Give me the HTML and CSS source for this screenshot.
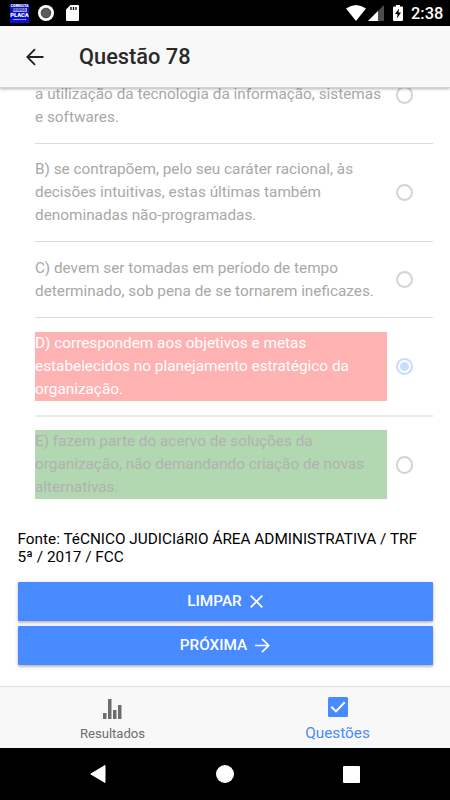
FILE: index.html
```html
<!DOCTYPE html>
<html lang="pt-BR">
<head>
<meta charset="utf-8">
<title>Questão 78</title>
<link rel="stylesheet" href="styles.css">
</head>
<body>
<div class="screen">
  <div class="status">
    <div class="app-icon"><span class="t1">CONSULTA</span><span class="t2">MINHA</span><span class="t3">PLACA</span><span class="t4">COMPLETA</span></div>
    <svg class="rec" width="16" height="16" viewBox="0 0 16 16"><circle cx="8" cy="8" r="8" fill="#fff"/><circle cx="8" cy="8" r="4.800" fill="#5c5c5c" stroke="#444" stroke-width="1"/></svg>
    <svg class="sd" width="13" height="16" viewBox="0 0 13 16"><path d="M4.500 0H12Q13 0 13 1V15Q13 16 12 16H1Q0 16 0 15V4.500Z" fill="#fff"/><path d="M5 2V5M7.500 2V5M10 2V5" stroke="#000" stroke-width="1.300"/></svg>
    <span class="spacer"></span>
    <svg class="wifi" width="20" height="16" viewBox="0 0 20 16"><path d="M0 3.500Q10-3.500 20 3.500L10 16Z" fill="#fff"/></svg>
    <svg class="signal" width="16" height="16" viewBox="0 0 16 16"><path d="M16 0V16H0Z" fill="#4d4d4d"/><path d="M10 6V16H0Z" fill="#fff"/></svg>
    <svg class="battery" width="10" height="16" viewBox="0 0 10 16"><path d="M3 0H7V1.500H9Q10 1.500 10 2.500V15Q10 16 9 16H1Q0 16 0 15V2.500Q0 1.500 1 1.500H3Z" fill="#fff"/><path d="M6 3.500L2 9H4.500L4 13.500L8 7.500H5.500Z" fill="#000"/></svg>
    <span class="clock">2:38</span>
  </div>
  <header class="header">
    <svg width="18" height="18" viewBox="0 0 18 18" fill="none" stroke="#222" stroke-width="1.800"><path d="M17.500 9H1.500M9 1.200L1.300 9L9 16.800"/></svg>
    <h1>Questão 78</h1>
  </header>
  <main class="content">
    <div class="list">
      <div class="item first"><p>a utilização da tecnologia da informação, sistemas<br>e softwares.</p><i class="radio"></i></div>
      <div class="item"><p>B) se contrapõem, pelo seu caráter racional, às<br>decisões intuitivas, estas últimas também<br>denominadas não-programadas.</p><i class="radio"></i></div>
      <div class="item"><p>C) devem ser tomadas em período de tempo<br>determinado, sob pena de se tornarem ineficazes.</p><i class="radio"></i></div>
      <div class="item chosen"><p class="wrong">D) correspondem aos objetivos e metas<br>estabelecidos no planejamento estratégico da<br>organização.</p><i class="radio on"></i></div>
      <div class="item last"><p class="right">E) fazem parte do acervo de soluções da<br>organização, não demandando criação de novas<br>alternativas.</p><i class="radio"></i></div>
    </div>
    <p class="source">Fonte: TéCNICO JUDICIáRIO ÁREA ADMINISTRATIVA / TRF<br>5ª / 2017 / FCC</p>
    <button class="btn">LIMPAR<svg class="x" width="13" height="13" viewBox="0 0 13 13" fill="none" stroke="#fff" stroke-width="1.700"><path d="M.7.7L12.300 12.300M12.300.7L.7 12.300"/></svg></button>
    <button class="btn">PRÓXIMA<svg width="15" height="15" viewBox="0 0 15 15" fill="none" stroke="#fff" stroke-width="1.700"><path d="M0 7.500H13.500M7 .8L13.700 7.500L7 14.200"/></svg></button>
  </main>
  <nav class="tabs">
    <div class="tab"><svg width="19" height="20" viewBox="0 0 19 20" fill="#6d6d6d"><path d="M0 14H3.500V20H0ZM5 0H8.500V20H5ZM10 11H13.500V20H10ZM15 6H18.500V20H15Z"/></svg><span>Resultados</span></div>
    <div class="tab active"><svg width="20" height="20" viewBox="0 0 20 20"><rect width="20" height="20" rx="1.500" fill="#488aff"/><path d="M3.300 9.800L8 14.400L16.700 5.300" fill="none" stroke="#fff" stroke-width="2"/></svg><span>Questões</span></div>
  </nav>
  <div class="sysnav">
    <svg width="16" height="18" viewBox="0 0 16 18"><path d="M15 .5V17.500L.8 9Z" fill="#fff" stroke="#fff" stroke-linejoin="round"/></svg>
    <svg width="18" height="18" viewBox="0 0 18 18"><circle cx="9" cy="9" r="9" fill="#fff"/></svg>
    <svg width="17" height="17" viewBox="0 0 17 17"><rect width="17" height="17" rx="1" fill="#fff"/></svg>
  </div>
</div>
</body>
</html>
```
FILE: styles.css
```css
* { box-sizing: border-box; }
body { margin: 0; font-family: Roboto, sans-serif; background: #fff; }
p, h1 { margin: 0; }
svg { display: block; flex: none; }
.screen { width: 450px; height: 800px; display: flex; flex-direction: column; overflow: hidden; }
.status { height: 26px; flex: none; background: #000; display: flex; align-items: center; padding: 0 9px 0 10px; }
.app-icon { width: 19px; height: 19px; background: #0f0fd0; color: #fff; display: flex; flex-direction: column; align-items: center; justify-content: space-between; overflow: hidden; font-weight: 900; line-height: 1; padding: 1px 0; }
.app-icon span { white-space: nowrap; }
.t1 { font-size: 3.5px; }
.t2 { font-size: 4px; background: #a6a6dc; color: #33a; width: 14px; text-align: center; }
.t3 { font-size: 5.8px; }
.t4 { font-size: 2.5px; }
.rec { margin-left: 9px; }
.sd { margin-left: 12px; }
.spacer { flex: 1; }
.wifi { margin-right: 1px; }
.battery { margin-left: 9px; }
.signal { margin-left: 1px; }
.clock { margin-left: 8px; color: #fff; font-size: 16.4px; font-weight: 500; line-height: 26px; padding-top: 2px; width: 30px; white-space: nowrap; }
.header { height: 62px; flex: none; position: relative; z-index: 2; background: #f8f8f8; display: flex; align-items: center; padding-left: 26px; border-bottom: 1px solid #d4d4d4; box-shadow: 0 1px 3px rgba(0,0,0,.3); }
.header h1 { margin-left: 35px; font-size: 21.8px; font-weight: 500; color: #2a2a2a; line-height: 26px; }
.content { height: 598px; flex: none; overflow: hidden; padding: 0 17.5px; display: flex; flex-direction: column; }
.list { margin-top: -5.400px; padding-left: 17.5px; }
.item { display: flex; justify-content: space-between; align-items: center; padding: 14.500px 19.500px 14px 0; border-bottom: 1px solid #dcdcdc; }
.item.first { padding-top: 0; }
.item.first .radio { align-self: flex-start; margin-top: 3.700px; }
.item.chosen { border-bottom: 2px solid #ebebeb; }
.item.last { border-bottom: 0; padding-top: 13.500px; }
.item p { width: 352px; font-size: 15.330px; line-height: 22.980px; color: #a8a8a8; white-space: nowrap; }
.item p.wrong { background: #ffb2b2; color: #fff; }
.item p.right { background: #b2d8b2; color: #b1b1b1; }
.radio { display: block; width: 17.500px; height: 17.500px; border: 2px solid #d3d3d3; border-radius: 50%; flex: none; }
.radio.on { border-color: #c8dcff; background: radial-gradient(circle, #c8dcff 0 4px, transparent 4.800px); }
.source { margin-top: 17px; font-size: 15.330px; line-height: 18px; color: #000; white-space: nowrap; }
.btn { margin: 0 0 4.500px; border: 0; border-radius: 1px; height: 39.500px; flex: none; background: #488aff; color: #fff; font: 500 15.330px/39px Roboto, sans-serif; display: flex; align-items: center; justify-content: center; padding: 0; box-shadow: 0 2px 2px rgba(0,0,0,.14), 0 1px 4px rgba(0,0,0,.2); }
.source + .btn { margin-top: 15.500px; }
.btn svg { margin-left: 8px; }
.tabs { height: 62px; flex: none; background: #f8f8f8; border-top: 1px solid #dedede; display: flex; }
.tab { flex: 1; display: flex; flex-direction: column; align-items: center; padding-top: 12px; color: #6d6d6d; font-size: 13.100px; }
.tab span { line-height: 18px; margin-top: 6px; }
.tab.active { padding-top: 9.500px; color: #488aff; font-size: 15.330px; }
.tab.active span { margin-top: 7.500px; }
.sysnav { height: 52px; flex: none; background: #000; display: flex; align-items: center; justify-content: space-between; padding: 0 90px; }
```
